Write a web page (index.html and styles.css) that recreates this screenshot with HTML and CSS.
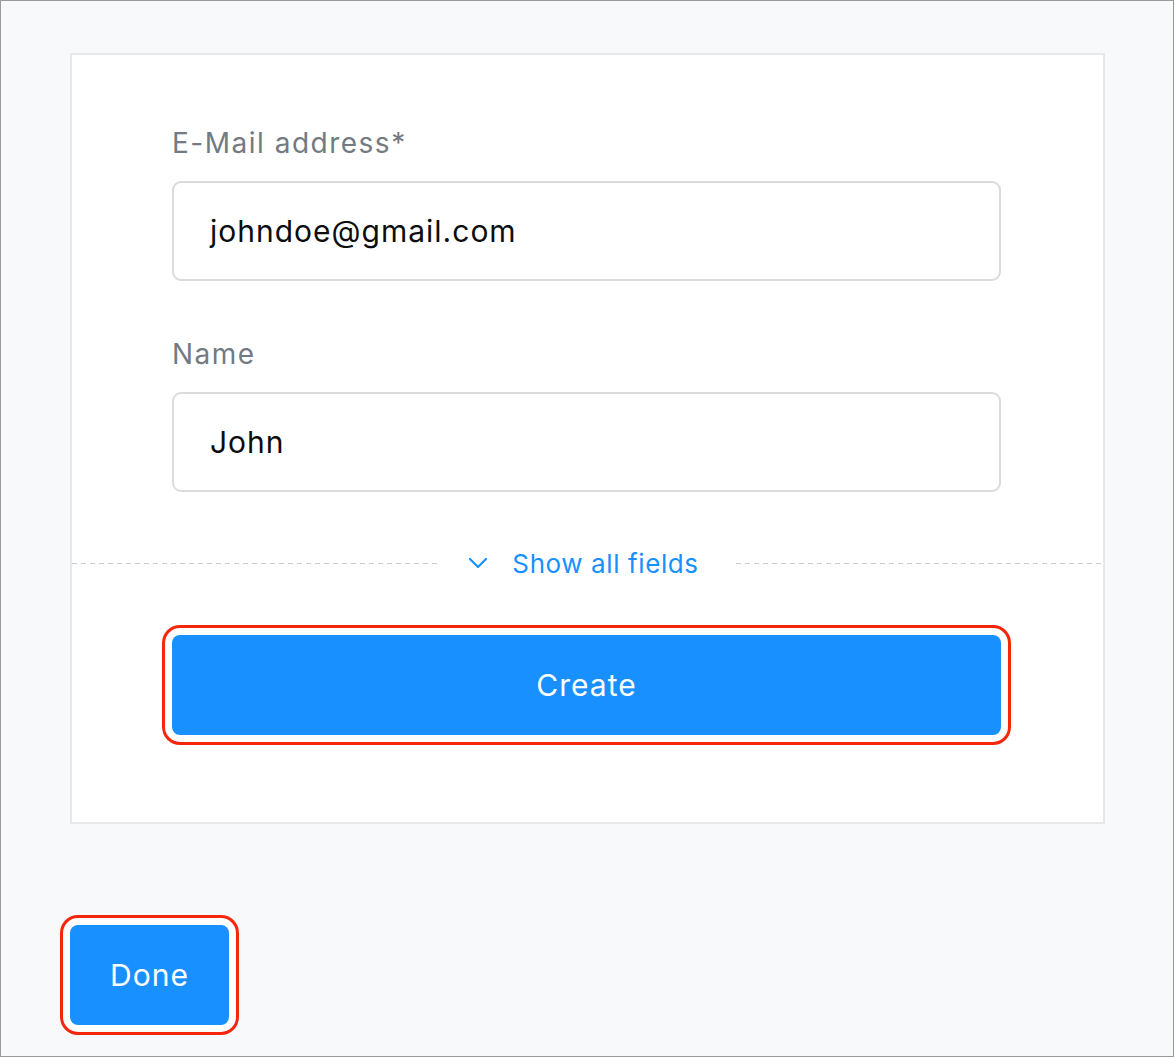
FILE: index.html
```html
<!DOCTYPE html>
<html lang="en">
<head>
<meta charset="utf-8">
<title>Create contact</title>
<link rel="stylesheet" href="styles.css">
</head>
<body>
<div class="frame">
  <section class="card">
    <div class="form">
      <label class="label">E-Mail address*</label>
      <div class="input">johndoe@gmail.com</div>
      <label class="label label-name">Name</label>
      <div class="input">John</div>
    </div>
    <div class="divider">
      <span class="line"></span>
      <button class="toggle" type="button">
        <svg class="chev" width="20" height="14" viewBox="0 0 20 14" aria-hidden="true"><path d="M2 3 L10 11 L18 3" fill="none" stroke="#1890ff" stroke-width="2.2" stroke-linecap="round" stroke-linejoin="round"/></svg>
        <span>Show all fields</span>
      </button>
      <span class="line"></span>
    </div>
    <div class="actions">
      <button class="btn btn-create" type="button">Create</button>
    </div>
  </section>
  <button class="btn btn-done" type="button">Done</button>
</div>
</body>
</html>
```
FILE: styles.css
```css
* { box-sizing: border-box; }
html, body { margin: 0; padding: 0; background: #ffffff; }
body { font-family: Inter, Lato, sans-serif; }

.frame {
  width: 1174px;
  height: 1057px;
  border: 1px solid #9a9a9a;
  background: #f8f9fb;
  padding: 52px 0 0 69px;
  display: flex;
  flex-direction: column;
  align-items: flex-start;
}

.card {
  width: 1035px;
  height: 771px;
  background: #ffffff;
  border: 2px solid #e7e8e9;
  display: flex;
  flex-direction: column;
}

.form {
  padding: 70px 102px 0 100px;
  display: flex;
  flex-direction: column;
}

.label {
  font-size: 28px;
  line-height: 36px;
  letter-spacing: 1.5px;
  color: #727a82;
  margin-bottom: 20px;
}
.label-name { margin-top: 55px; }

.input {
  height: 100px;
  border: 2px solid #d9dbdd;
  border-radius: 9px;
  padding: 0 36px;
  display: flex;
  align-items: center;
  font-size: 30px;
  letter-spacing: 1px;
  color: #0d0d0d;
}

.divider {
  margin-top: 51px;
  height: 40px;
  display: flex;
  align-items: center;
}
.line {
  flex: 1;
  height: 1px;
  background: repeating-linear-gradient(90deg, #c9cbcd 0 5px, transparent 5px 9px);
}
.toggle {
  border: 0;
  background: none;
  padding: 0 37px 0 29px;
  display: flex;
  align-items: center;
  gap: 24px;
  font-family: inherit;
  font-size: 26px;
  letter-spacing: 0.6px;
  color: #1890ff;
  cursor: pointer;
}
.chev { display: block; }

.actions {
  padding: 52px 102px 0 100px;
}

.btn {
  border: 0;
  border-radius: 8px;
  background: #1890ff;
  color: #ffffff;
  font-family: inherit;
  font-size: 30px;
  letter-spacing: 1px;
  box-shadow: 0 0 0 7px #ffffff, 0 0 0 10px #f5260c;
  cursor: pointer;
}
.btn-create {
  width: 100%;
  height: 100px;
}
.btn-done {
  margin-top: 101px;
  width: 159px;
  height: 100px;
}
```
